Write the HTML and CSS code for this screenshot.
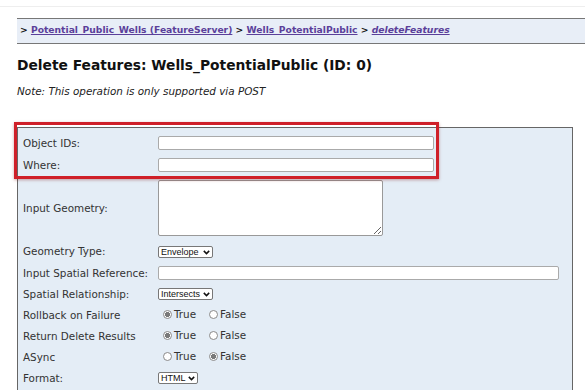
FILE: index.html
```html
<!DOCTYPE html>
<html>
<head>
<meta charset="utf-8">
<link rel="stylesheet" href="styles.css">
</head>
<body>
<div class="topline"></div>
<div class="crumbs">
  &gt; <a href="#">Potential_Public_Wells (FeatureServer)</a> &gt; <a href="#">Wells_PotentialPublic</a> &gt; <a href="#"><i>deleteFeatures</i></a>
</div>
<h2 class="title">Delete Features: Wells_PotentialPublic (ID: 0)</h2>
<div class="note">Note: This operation is only supported via POST</div>
<div class="panel">
  <div class="highlight"></div>
  <table class="form">
    <tr><td class="lbl">Object IDs:</td><td><input class="txt" type="text"></td></tr>
    <tr><td class="lbl">Where:</td><td><input class="txt" type="text"></td></tr>
    <tr class="tall"><td class="lbl">Input Geometry:</td><td><textarea class="area"></textarea></td></tr>
    <tr><td class="lbl">Geometry Type:</td><td><span class="selwrap"><select class="sel w55"><option>Envelope</option></select><svg class="chev" width="7" height="5" viewBox="0 0 7 5"><path d="M0.8 0.9 L3.5 3.6 L6.2 0.9" fill="none" stroke="#111" stroke-width="1.5"/></svg></span></td></tr>
    <tr class="r21"><td class="lbl">Input Spatial Reference:</td><td><input class="txt wide" type="text"></td></tr>
    <tr class="r21"><td class="lbl">Spatial Relationship:</td><td><span class="selwrap"><select class="sel w55"><option>Intersects</option></select><svg class="chev" width="7" height="5" viewBox="0 0 7 5"><path d="M0.8 0.9 L3.5 3.6 L6.2 0.9" fill="none" stroke="#111" stroke-width="1.5"/></svg></span></td></tr>
    <tr class="r21"><td class="lbl">Rollback on Failure</td><td><label class="opt"><input type="radio" name="r1" checked>True</label><label class="opt"><input type="radio" name="r1">False</label></td></tr>
    <tr class="r21"><td class="lbl">Return Delete Results</td><td><label class="opt"><input type="radio" name="r2" checked>True</label><label class="opt"><input type="radio" name="r2">False</label></td></tr>
    <tr class="r21"><td class="lbl">ASync</td><td><label class="opt"><input type="radio" name="r3">True</label><label class="opt"><input type="radio" name="r3" checked>False</label></td></tr>
    <tr class="r21"><td class="lbl">Format:</td><td><span class="selwrap"><select class="sel w40"><option>HTML</option></select><svg class="chev" width="7" height="5" viewBox="0 0 7 5"><path d="M0.8 0.9 L3.5 3.6 L6.2 0.9" fill="none" stroke="#111" stroke-width="1.5"/></svg></span></td></tr>
  </table>
</div>
</body>
</html>
```
FILE: styles.css
```css
html, body { margin: 0; padding: 0; background: #fff; }
body { font-family: "DejaVu Sans", Verdana, sans-serif; font-size: 10.4px; color: #222; overflow: hidden; }
.topline { height: 6px; border-bottom: 1px solid #eee; }
.crumbs {
  margin: 11px 0 0 17px;
  background: #e8eef7;
  border-top: 1px solid #777;
  border-bottom: 1px solid #777;
  height: 26px;
  box-sizing: border-box;
  padding: 5px 3px 3px;
  font-weight: bold;
  font-size: 9.2px;
  color: #111;
}
.crumbs a { color: #5b3f9a; }
.title { margin: 13px 0 0 17px; font-size: 13.8px; font-weight: bold; color: #111; }
.note { margin: 12px 0 0 17px; font-style: italic; font-size: 10.4px; color: #222; }
.panel {
  position: relative;
  margin: 30px 12px 0 17px;
  background: #e4edf6;
  border: 1px solid #666;
  border-bottom: none;
  height: 300px;
  padding: 4px 0 0 5px;
}
.highlight {
  position: absolute;
  left: -4px; top: -6px;
  width: 419px; height: 51px;
  border: 3px solid #cf2029;
  box-shadow: 0 1px 3px rgba(120,0,0,.35);
}
.form { border-collapse: collapse; }
.form td { padding: 0; height: 22px; vertical-align: middle; }
.form tr.tall td { height: 64px; }
.form tr.r21 td { height: 21px; }
.form td.lbl { width: 135px; color: #333; }
.txt { width: 276px; height: 14px; box-sizing: border-box; border: 1px solid #aaa; border-radius: 2px; padding: 0; margin: 0; background: #fff; display: block; }
.txt.wide { width: 401px; }
.area { width: 225px; height: 56px; box-sizing: border-box; border: 1px solid #999; border-radius: 2px; margin: 0; display: block; }
.selwrap { position: relative; display: inline-block; vertical-align: middle; }
.sel {
  appearance: none; -webkit-appearance: none;
  font-family: "Liberation Sans", Arial, sans-serif; font-size: 9px; line-height: 10px;
  height: 12px; padding: 0 0 0 2px; border: 1px solid #777; border-radius: 2px;
  background: #fff; color: #111; display: block; box-sizing: border-box;
}
.w55 { width: 55px; }
.w40 { width: 40px; }
.chev { position: absolute; right: 3px; top: 4px; pointer-events: none; }
.opt { display: inline-flex; align-items: center; margin-left: 5px; margin-right: 8px; color: #333; }
.opt input {
  appearance: none; -webkit-appearance: none;
  width: 9px; height: 9px; margin: 0 2px 0 0;
  border: 1px solid #8a8a8a; border-radius: 50%; background: #fff; box-sizing: border-box;
}
.opt input:checked { background: radial-gradient(circle, #7a7a7a 0 2.3px, #fff 2.8px); }
```
